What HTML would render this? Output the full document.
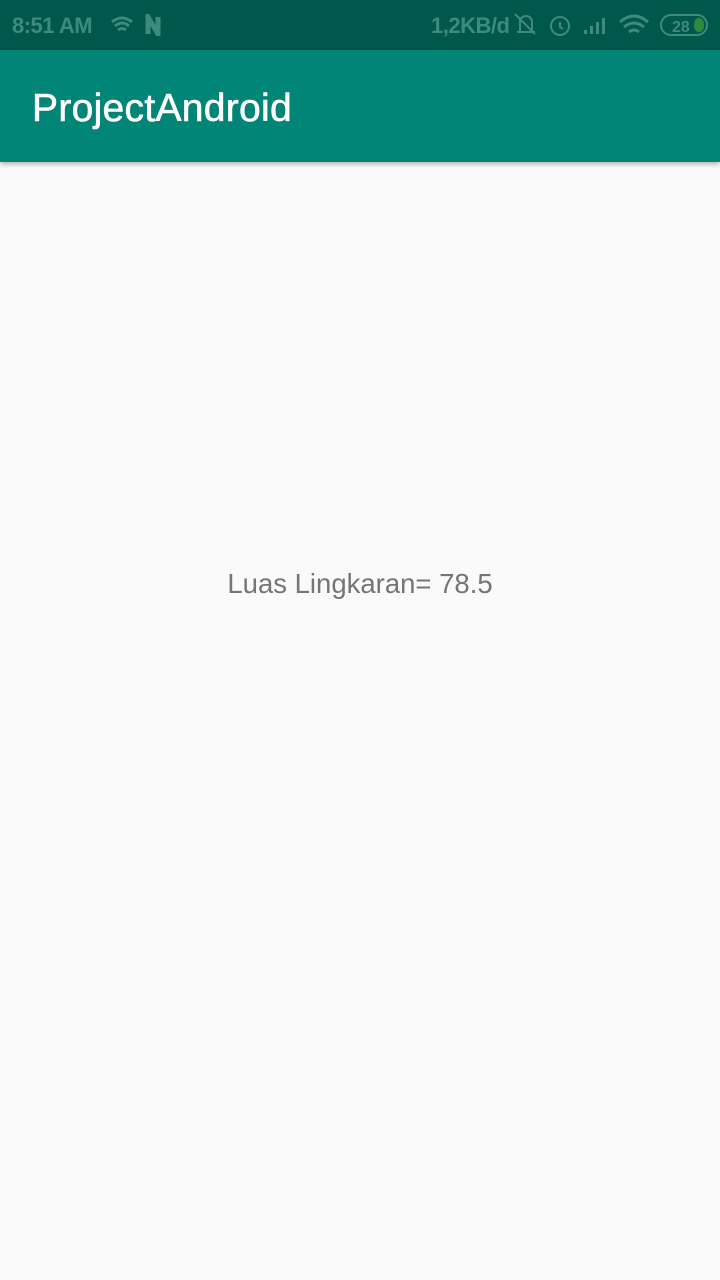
<!DOCTYPE html>
<html><head><meta charset="utf-8"><style>
body{margin:0;width:720px;height:1280px;background:#fafafa;font-family:"Liberation Sans",sans-serif;position:relative;overflow:hidden}
.sb{position:absolute;top:0;left:0;width:720px;height:50px;background:#00574b;color:#3e8a7c;font-weight:bold;font-size:22px}
.ab{position:absolute;top:50px;left:0;width:720px;height:112px;background:#008577;box-shadow:0 2px 5px rgba(0,0,0,.3)}
.ab span{position:absolute;left:32px;top:37px;color:#fff;font-size:39px;letter-spacing:0.3px;-webkit-text-stroke:0.6px #fff}
.t{position:absolute;top:568px;left:0;width:720px;text-align:center;color:#757575;font-size:27.5px}
</style></head><body>
<div class="sb">
<span style="position:absolute;left:12px;top:13px;letter-spacing:-0.5px">8:51 AM</span>
<svg style="position:absolute;left:110px;top:14px" width="64" height="22"><path d="M2 8 Q12 0 22 8 M5 12 Q12 6 19 12 M8 16 Q12 13 16 16" stroke="#3e8a7c" stroke-width="3" fill="none"/><path d="M38 20V3l10 17V3" stroke="#3e8a7c" stroke-width="5" fill="none"/></svg>
<span style="position:absolute;left:431px;top:13px;letter-spacing:-0.5px">1,2KB/d</span>
<svg style="position:absolute;left:512px;top:10px" width="200" height="30"><path d="M5 22h18M8 22V12a6 6 0 0 1 12 0v10M3 4l20 20" stroke="#3e8a7c" stroke-width="2" fill="none"/><circle cx="48" cy="16" r="9" stroke="#3e8a7c" stroke-width="2" fill="none"/><path d="M48 12v5l3 2" stroke="#3e8a7c" stroke-width="2" fill="none"/><path d="M72 24h3v-4h-3zM78 24h3v-8h-3zM84 24h3v-12h-3zM90 24h3v-16h-3z" fill="#3e8a7c"/><path d="M108 12 Q122 0 136 12M112 17 Q122 9 132 17M117 22 Q122 18 127 22" stroke="#3e8a7c" stroke-width="3" fill="none"/><rect x="149" y="5" width="46" height="20" rx="10" stroke="#3e8a7c" stroke-width="2" fill="none"/><rect x="182" y="8" width="10" height="14" rx="6" fill="#2e8b3e"/><text x="160" y="22" font-size="16" fill="#3e8a7c" font-family="Liberation Sans">28</text></svg>
</div>
<div class="ab"><span>ProjectAndroid</span></div>
<div class="t">Luas Lingkaran= 78.5</div>
</body></html>
